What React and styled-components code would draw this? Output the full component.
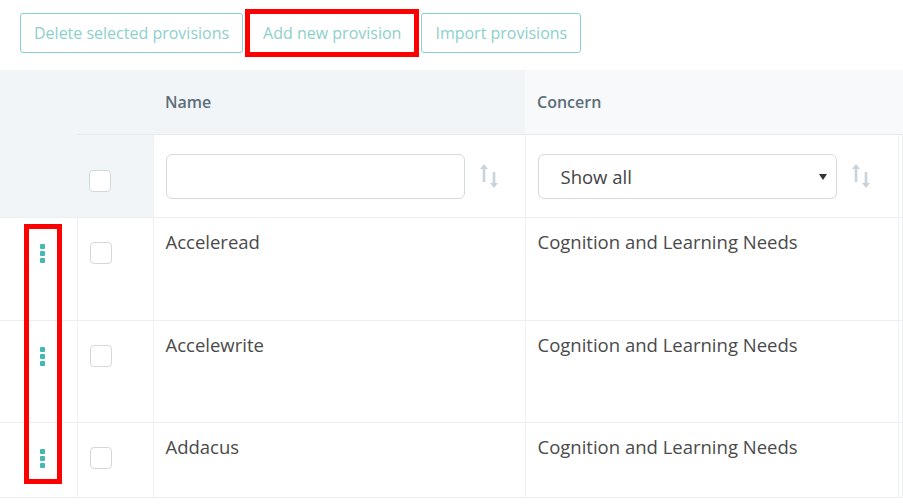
import React from 'react'
import styled, { createGlobalStyle } from 'styled-components'

const GlobalStyle = createGlobalStyle`
  body {
    margin: 0;
    background: #fff;
    font-family: 'Open Sans', 'Liberation Sans', sans-serif;
  }
`

const Page = styled.div`
  position: relative;
  width: 903px;
  height: 504px;
  overflow: hidden;
`

// toolbar
const Toolbar = styled.div`
  display: flex;
  gap: 6px;
  padding: 13px 0 0 20px;
  margin-bottom: 17px;
`
const ToolButton = styled.button`
  height: 40px;
  padding: 0 13px;
  border: 1px solid #84d2cd;
  border-radius: ${props => (props.marked ? '0' : '3px')};
  background: #fff;
  color: #8dd0cb;
  font-family: 'Open Sans', 'Liberation Sans', sans-serif;
  font-size: 16px;
  cursor: pointer;
  outline: ${props => (props.marked ? '5px solid #ff0000' : 'none')};
  outline-offset: -1px;
`

// table
const Table = styled.table`
  width: 903px;
  border-collapse: collapse;
  table-layout: fixed;
`
const HeadCell = styled.th`
  height: 64px;
  padding: 0 12px;
  background: ${props => (props.light ? '#f7f9fa' : '#f2f5f7')};
  color: #5c6f79;
  font-size: 16px;
  font-weight: 600;
  text-align: left;
  vertical-align: middle;
  border-bottom: 1px solid #e7ebee;
`
const HandleHead = styled.th`
  background: #f2f5f7;
  border-bottom: 1px solid #eceff1;
`
const FilterCell = styled.td`
  height: 82px;
  padding: 0 12px;
  background: ${props => (props.grey ? '#f2f5f7' : '#fff')};
  border-right: 1px solid #eef1f3;
  border-bottom: 1px solid #eceff1;
  vertical-align: middle;
`
const Cell = styled.td`
  height: ${props => props.h}px;
  padding: 10px 12px 0;
  box-sizing: border-box;
  border-right: 1px solid #eef1f3;
  border-bottom: 1px solid #eceff1;
  vertical-align: top;
  color: #4a4a4a;
  font-size: 18.5px;
  line-height: 27px;
`
const HandleCell = styled(Cell)`
  padding: 26px 0 0 40px;
`
const BoxCell = styled(Cell)`
  padding: 24px 0 0 12px;
`
const FilterWrap = styled.div`
  display: flex;
  align-items: center;
  gap: 14px;
`
const FilterBoxWrap = styled.div`
  padding: 10px 0 0 0;
`

const Checkbox = styled.span`
  display: block;
  width: 22px;
  height: 22px;
  box-sizing: border-box;
  border: 1.5px solid #d3d8db;
  border-radius: 4px;
  background: #fff;
`
const TextInput = styled.input`
  width: 299px;
  height: 45px;
  box-sizing: border-box;
  border: 1.5px solid #d5dadd;
  border-radius: 6px;
  background: #fff;
  font-family: inherit;
  font-size: 18px;
  padding: 0 22px;
  outline: none;
`
const SelectWrap = styled.div`
  position: relative;
  width: 299px;
  height: 45px;
  &::after {
    content: '';
    position: absolute;
    right: 10px;
    top: 20px;
    border-left: 4px solid transparent;
    border-right: 4px solid transparent;
    border-top: 6px solid #333;
    pointer-events: none;
  }
`
const Select = styled.select`
  width: 100%;
  height: 100%;
  box-sizing: border-box;
  appearance: none;
  border: 1.5px solid #d5dadd;
  border-radius: 6px;
  background: #fff;
  color: #444;
  font-family: inherit;
  font-size: 18.5px;
  padding: 0 22px;
  outline: none;
`

const Dots = styled.div`
  display: flex;
  flex-direction: column;
  gap: 2px;
  span {
    display: block;
    width: 5px;
    height: 5px;
    background: #43b9b1;
    border-radius: 1px;
  }
`

// red annotation over the row handles
const Marker = styled.div`
  position: absolute;
  left: 24px;
  top: 224px;
  width: 38px;
  height: 260px;
  box-sizing: border-box;
  border: 5px solid #ff0000;
  pointer-events: none;
`

const SortIcon = () => (
  <svg width="20" height="26" viewBox="0 0 20 26" fill="none">
    <path d="M5 4v15" stroke="#c9d3d9" strokeWidth="2.6" />
    <path d="M1 6l4-5 4 5z" fill="#c9d3d9" />
    <path d="M15 9v13" stroke="#c9d3d9" strokeWidth="2.6" />
    <path d="M11 20l4 5 4-5z" fill="#c9d3d9" />
  </svg>
)

const rows = [
  { id: 1, name: 'Acceleread', concern: 'Cognition and Learning Needs', h: 103 },
  { id: 2, name: 'Accelewrite', concern: 'Cognition and Learning Needs', h: 102 },
  { id: 3, name: 'Addacus', concern: 'Cognition and Learning Needs', h: 75 }
]

export default function App() {
  return (
    <Page>
      <GlobalStyle />
      <Toolbar>
        <ToolButton>Delete selected provisions</ToolButton>
        <ToolButton marked>Add new provision</ToolButton>
        <ToolButton>Import provisions</ToolButton>
      </Toolbar>
      <Table>
        <colgroup>
          <col style={{ width: 77 }} />
          <col style={{ width: 76 }} />
          <col style={{ width: 372 }} />
          <col style={{ width: 373 }} />
          <col />
        </colgroup>
        <thead>
          <tr>
            <HandleHead rowSpan={2} />
            <HeadCell />
            <HeadCell>Name</HeadCell>
            <HeadCell light>Concern</HeadCell>
            <HeadCell light />
          </tr>
          <tr>
            <FilterCell grey>
              <FilterBoxWrap>
                <Checkbox />
              </FilterBoxWrap>
            </FilterCell>
            <FilterCell>
              <FilterWrap>
                <TextInput type="text" />
                <SortIcon />
              </FilterWrap>
            </FilterCell>
            <FilterCell>
              <FilterWrap>
                <SelectWrap>
                  <Select defaultValue="all">
                    <option value="all">Show all</option>
                  </Select>
                </SelectWrap>
                <SortIcon />
              </FilterWrap>
            </FilterCell>
            <FilterCell />
          </tr>
        </thead>
        <tbody>
          {rows.map(row => (
            <tr key={row.id}>
              <HandleCell h={row.h}>
                <Dots>
                  <span />
                  <span />
                  <span />
                </Dots>
              </HandleCell>
              <BoxCell h={row.h}>
                <Checkbox />
              </BoxCell>
              <Cell h={row.h}>{row.name}</Cell>
              <Cell h={row.h}>{row.concern}</Cell>
              <Cell h={row.h} />
            </tr>
          ))}
        </tbody>
      </Table>
      <Marker />
    </Page>
  )
}
